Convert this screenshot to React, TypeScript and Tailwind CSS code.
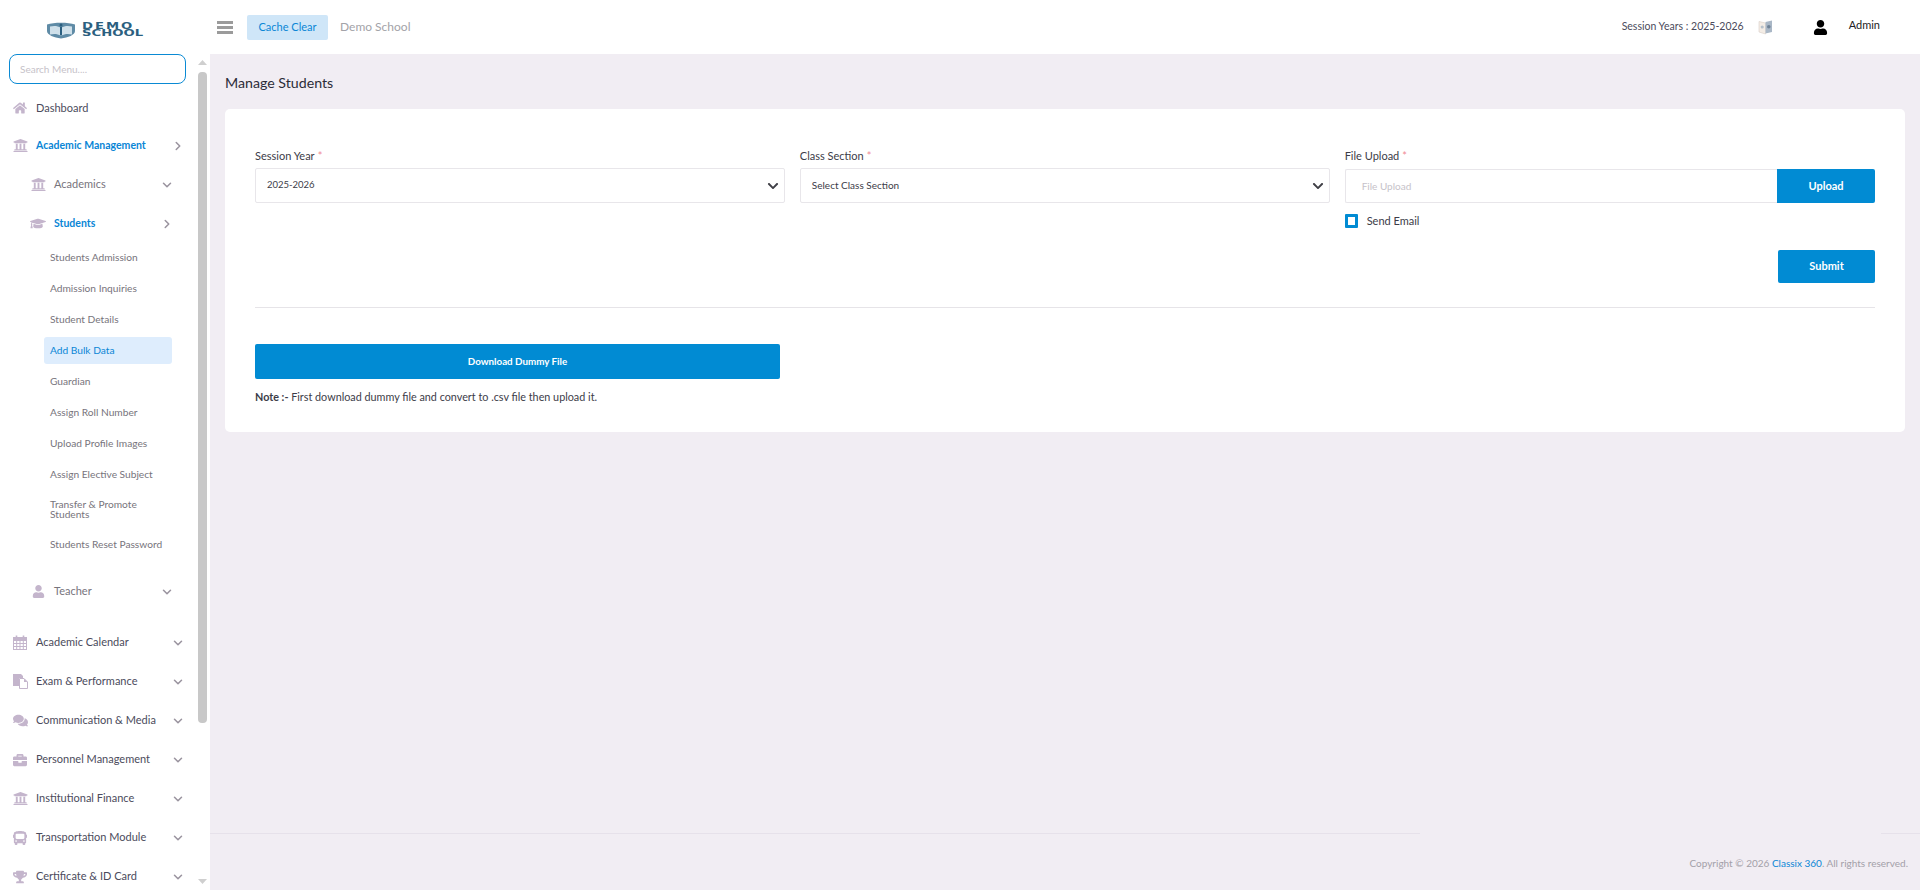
import React from "react";
import { FaHome, FaUniversity, FaGraduationCap, FaUser, FaComments, FaBriefcase, FaBus, FaTrophy, FaChevronDown } from "react-icons/fa";
import { FiChevronDown, FiChevronRight } from "react-icons/fi";

const ICON = "text-[#c4b5cc] shrink-0";

function Chevron({ open }: { open?: boolean }) {
  return (
    <span className="ml-auto text-[#9a949f]">
      {open ? <FiChevronRight size={14} strokeWidth={2.6} /> : <FiChevronDown size={14} strokeWidth={2.6} />}
    </span>
  );
}

function CalendarIcon() {
  return (
    <svg width="14" height="15" viewBox="0 0 14 15" fill="none" stroke="currentColor" strokeWidth="1">
      <rect x="0.5" y="2.5" width="13" height="12" fill="none" />
      <rect x="0.5" y="2.5" width="13" height="3" fill="currentColor" />
      <path d="M3.5 0.5V3.5M10.5 0.5V3.5" strokeWidth="1.6" />
      <path d="M0.5 8.5H13.5M0.5 11.5H13.5M3.7 5.5V14.5M7 5.5V14.5M10.3 5.5V14.5" />
    </svg>
  );
}

function FilesIcon() {
  return (
    <svg width="15" height="15" viewBox="0 0 15 15">
      <path d="M0 0 H8 L10 2 V4 H6 V12 H0 Z" fill="currentColor" />
      <path d="M6.5 4.5 H11 L14.5 8 V14.5 H6.5 Z" fill="#fff" stroke="currentColor" />
      <path d="M11 4.5 V8 H14.5 Z" fill="currentColor" />
    </svg>
  );
}

function TopRow({ icon, label, active, open, h = "h-[39px]" }: { icon: React.ReactNode; label: string; active?: boolean; open?: boolean; h?: string }) {
  return (
    <div className={`${h} flex items-center pl-3 pr-[13px]`}>
      <span className={`w-4 flex justify-center ${ICON}`}>{icon}</span>
      <span className={`ml-2 ${active ? "text-[10.5px] font-bold text-[#0a86d6]" : "text-[11px] text-[#4b4b5c]"}`}>{label}</span>
      {open !== undefined && <Chevron open={open} />}
    </div>
  );
}

function SubRow({ icon, label, active, open }: { icon: React.ReactNode; label: string; active?: boolean; open?: boolean }) {
  return (
    <div className="h-[39px] pt-[2px] flex items-center pl-[30px] pr-6">
      <span className={`w-4 flex justify-center ${ICON}`}>{icon}</span>
      <span className={`ml-2 ${active ? "text-[10.5px] font-bold text-[#0a86d6]" : "text-[11px] text-[#77747c]"}`}>{label}</span>
      <Chevron open={open} />
    </div>
  );
}

function Leaf({ label, active, h = "h-[31px]" }: { label: string; active?: boolean; h?: string }) {
  return (
    <div className={`${h} flex items-center`}>
      <div className={`ml-11 w-32 pl-1.5 pr-2 text-[10.2px] leading-[10px] ${active ? "h-[27px] pb-[2px] flex items-center rounded-[3px] bg-[#deedfd] text-[#0a86d6]" : "mb-[2px] text-[#77747c]"}`}>
        {label}
      </div>
    </div>
  );
}

function Sidebar() {
  const leaves = ["Students Admission", "Admission Inquiries", "Student Details", "Add Bulk Data", "Guardian", "Assign Roll Number", "Upload Profile Images", "Assign Elective Subject"];
  return (
    <aside className="w-[210px] shrink-0 bg-white flex flex-col h-full">
      <div className="h-[54px] shrink-0 flex items-start pl-[46px] pt-[21px]">
        <svg width="30" height="17" viewBox="0 0 30 17" className="shrink-0 mt-[1px]">
          <path d="M1 2.5 C8 0 22 0 29 2.5 L29 9 C29 13 22 15.5 15 16.5 C8 15.5 1 13 1 9 Z" fill="#5f8ba6" />
          <path d="M4 4.5 C8 3.5 12 4 14.5 5.5 L14.5 13.5 C12 12 8 11.5 4 12.5 Z" fill="#cfe0ea" />
          <path d="M26 4.5 C22 3.5 18 4 15.5 5.5 L15.5 13.5 C18 12 22 11.5 26 12.5 Z" fill="#cfe0ea" />
          <rect x="13.5" y="1.5" width="3" height="3" rx="1.5" fill="#2b5f80" />
          <rect x="14" y="5" width="2" height="8" fill="#2b5f80" />
        </svg>
        <div className="ml-[6px] mt-[2px] w-10 font-['DejaVu_Sans',sans-serif] font-bold text-[#2b5f80] text-[8px] leading-[7px] origin-left scale-x-[1.65] whitespace-nowrap">
          <div className="tracking-[1.2px]">DEMO</div>
          <div>SCHOOL</div>
        </div>
      </div>
      <div className="flex-1 min-h-0 flex">
        <div className="w-[198px] shrink-0 overflow-hidden">
          <div className="ml-[9px] w-[177px] h-[30px] rounded-[8px] border border-[#0a8ad4] flex items-center pl-[10px] text-[10px] text-[#c6c2c9]">Search Menu....</div>
          <nav className="pt-[5px]">
            <TopRow icon={<FaHome size={14} />} label="Dashboard" h="h-[38px]" />
            <TopRow icon={<FaUniversity size={15} />} label="Academic Management" active open h="h-[37px]" />
            <SubRow icon={<FaUniversity size={15} />} label="Academics" />
            <SubRow icon={<FaGraduationCap size={17} />} label="Students" active open />
            {leaves.map((l) => (
              <Leaf key={l} label={l} active={l === "Add Bulk Data"} />
            ))}
            <Leaf label="Transfer & Promote Students" h="h-[39px]" />
            <Leaf label="Students Reset Password" />
            <div className="h-[11px]" />
            <SubRow icon={<FaUser size={13} />} label="Teacher" />
            <div className="h-[13px]" />
            <TopRow icon={<CalendarIcon />} label="Academic Calendar" open={false} />
            <TopRow icon={<FilesIcon />} label="Exam & Performance" open={false} />
            <TopRow icon={<FaComments size={15} />} label="Communication & Media" open={false} />
            <TopRow icon={<FaBriefcase size={14} />} label="Personnel Management" open={false} />
            <TopRow icon={<FaUniversity size={15} />} label="Institutional Finance" open={false} />
            <TopRow icon={<FaBus size={14} />} label="Transportation Module" open={false} />
            <TopRow icon={<FaTrophy size={14} />} label="Certificate & ID Card" open={false} />
          </nav>
        </div>
        <div className="w-[9px] shrink-0 flex flex-col items-center pt-[6px] pb-[6px]">
          <svg width="9" height="5" viewBox="0 0 9 5" className="shrink-0"><path d="M4.5 0 L9 5 H0 Z" fill="#cfcfcf" /></svg>
          <div className="mt-[7px] w-[9px] h-[651px] rounded-[4px] bg-[#c8c8c8]" />
          <svg width="9" height="5" viewBox="0 0 9 5" className="mt-auto shrink-0"><path d="M0 0 H9 L4.5 5 Z" fill="#cfcfcf" /></svg>
        </div>
      </div>
    </aside>
  );
}

function Header() {
  return (
    <header className="h-[54px] shrink-0 bg-white flex items-center pl-[7px] pr-[40px]">
      <svg width="16" height="13" viewBox="0 0 16 13" className="text-[#9b9b9b] shrink-0">
        <rect width="16" height="3" fill="currentColor" />
        <rect y="5" width="16" height="3" fill="currentColor" />
        <rect y="10" width="16" height="3" fill="currentColor" />
      </svg>
      <div className="ml-[14px] w-[81px] h-[25px] rounded-[2px] bg-[#cfe6f8] flex items-center justify-center text-[11px] text-[#0a86d6]">Cache Clear</div>
      <div className="ml-3 text-[12px] text-[#a3a3a8]">Demo School</div>
      <div className="ml-auto text-[10.5px] text-[#4b4b5c]">Session Years : 2025-2026</div>
      <svg width="15" height="16" viewBox="0 0 15 16" className="ml-[14px]">
        <path d="M1 2.5 L7.5 4 V15 L1 13 Z" fill="#f4ede6" stroke="#d9cfc6" strokeWidth="0.6" />
        <path d="M7.5 3 L14 1.5 V13 L7.5 14.5 Z" fill="#a9b7c6" />
        <circle cx="4.2" cy="8" r="1.6" fill="#b8c2cc" />
        <circle cx="10.8" cy="7.8" r="1.8" fill="#6f8296" />
      </svg>
      <FaUser size={15} className="ml-10 text-black" />
      <div className="ml-[21px] mb-1 text-[11px] text-[#222]">Admin</div>
    </header>
  );
}

function Label({ text }: { text: string }) {
  return (
    <div className="h-[18px] flex items-center text-[11px] text-[#3c3c48]">
      {text}
      <span className="ml-[3px] text-[#f08a94]">*</span>
    </div>
  );
}

function SelectBox({ value, size }: { value: string; size: string }) {
  return (
    <div className={`mt-[3px] h-[35px] rounded-[2px] border border-[#e8e6ea] bg-white flex items-center pl-[11px] pr-[5px] ${size} text-[#3c3c48]`}>
      {value}
      <FaChevronDown size={12} className="ml-auto text-[#3f3f46]" />
    </div>
  );
}

export default function App() {
  return (
    <div className="flex h-[890px] overflow-hidden bg-[#f1edf3] font-['Lato',sans-serif]">
      <Sidebar />
      <div className="flex-1 min-w-0 flex flex-col">
        <Header />
        <main className="flex-1 min-h-0 flex flex-col">
          <div className="px-[15px] pt-5">
            <h1 className="h-5 pb-[2px] flex items-center text-[14.2px] text-[#2c2c38]">Manage Students</h1>
            <section className="mt-[15px] h-[323px] rounded-[5px] bg-white px-[30px] pt-[38px]">
              <div className="grid grid-cols-3 gap-x-[14.5px]">
                <div>
                  <Label text="Session Year" />
                  <SelectBox value="2025-2026" size="text-[9.5px]" />
                </div>
                <div>
                  <Label text="Class Section" />
                  <SelectBox value="Select Class Section" size="text-[10px]" />
                </div>
                <div>
                  <Label text="File Upload" />
                  <div className="mt-1 h-[34px] flex">
                    <div className="flex-1 border border-r-0 border-[#e8e6ea] rounded-l-[2px] flex items-center pl-4 text-[10px] text-[#c6c2c9]">File Upload</div>
                    <div className="w-[98px] rounded-r-[2px] bg-[#018bd3] text-white text-[11px] font-bold flex items-center justify-center">Upload</div>
                  </div>
                  <div className="mt-[11px] h-[14px] flex items-center">
                    <span className="w-[13px] h-[14px] border-[3px] border-[#018bd3] rounded-[1px] bg-white" />
                    <span className="ml-[9px] text-[11px] text-[#3c3c48]">Send Email</span>
                  </div>
                </div>
              </div>
              <div className="mt-[22px] flex justify-end">
                <div className="w-[97px] h-[33px] rounded-[2px] bg-[#018bd3] text-white text-[11px] font-bold flex items-center justify-center">Submit</div>
              </div>
              <div className="mt-6 h-px bg-[#e6e4e8]" />
              <div className="mt-9 w-[525px] h-[35px] rounded-[2px] bg-[#018bd3] text-white text-[9.8px] font-bold flex items-center justify-center">Download Dummy File</div>
              <p className="mt-[10px] h-4 flex items-center text-[10.8px] text-[#3c3c48] whitespace-pre">
                <b>Note :-</b> First download dummy file and convert to .csv file then upload it.
              </p>
            </section>
          </div>
          <footer className="mt-auto h-[57px] shrink-0">
            <div className="flex h-px">
              <div className="flex-1 bg-[#e6e1ea]" />
              <div className="w-[461px]" />
              <div className="w-[39px] bg-[#e6e1ea]" />
            </div>
            <div className="pt-[22px] pr-3 text-right text-[10px] text-[#a3a0a8]">
              Copyright © 2026 <span className="text-[#0a86d6]">Classix 360</span>. All rights reserved.
            </div>
          </footer>
        </main>
      </div>
    </div>
  );
}
